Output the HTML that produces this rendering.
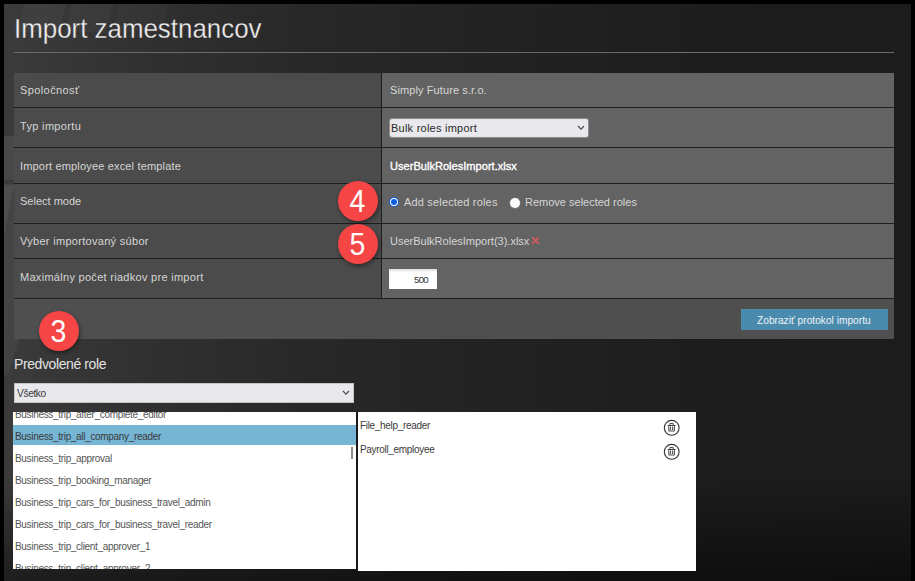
<!DOCTYPE html>
<html><head><meta charset="utf-8">
<style>
html,body{margin:0;padding:0;}
body{width:915px;height:581px;background:#000;position:relative;overflow:hidden;font-family:"Liberation Sans",sans-serif;}
.panel{position:absolute;left:4px;top:4px;width:907px;height:577px;overflow:hidden;
 background:linear-gradient(180deg,rgba(0,0,0,0) 0px,rgba(0,0,0,0) 470px,rgba(0,0,0,.5) 577px),
 linear-gradient(90deg,#3b3b3b 0px,#303030 150px,#282828 300px,#222 500px,#1d1d1d 700px,#1c1c1c 907px);}
.abs{position:absolute;white-space:nowrap;}
.t{position:absolute;white-space:nowrap;line-height:1;}
.lab{color:#d6d6d6;font-size:11px;left:20px;}
.val{color:#d6d6d6;font-size:11px;left:390px;}
.badge{position:absolute;width:40px;height:40px;border-radius:50%;background:#f54545;box-shadow:1px 2px 4px rgba(0,0,0,.45);color:#fff;font-size:30.6px;text-align:center;line-height:40px;}
.badge span{display:inline-block;transform:scaleX(.93);}
.item{position:absolute;left:16px;font-size:10px;letter-spacing:-0.32px;color:#555;line-height:1;white-space:nowrap;}
</style></head>
<body>
<div class="panel"></div>
<div class="abs" style="left:4px;top:4px;width:300px;height:27.5px;overflow:hidden">
 <div class="abs" style="left:19.7px;top:0;width:41.9px;height:27.5px;background:rgba(255,255,255,.035);transform:skewX(-13.7deg);transform-origin:0 0"></div>
 <div class="abs" style="left:68px;top:0;width:41px;height:27.5px;background:rgba(255,255,255,.03);transform:skewX(-13.7deg);transform-origin:0 0"></div>
 <div class="abs" style="left:115px;top:0;width:50px;height:27.5px;background:rgba(255,255,255,.02);transform:skewX(-13.7deg);transform-origin:0 0"></div>
</div>
<div class="abs" style="left:4px;top:136px;width:10px;height:44px;background:#484848"></div>
<div class="abs" style="left:4px;top:180px;width:10px;height:4px;background:#3c3c3c"></div>
<div class="abs" style="left:4px;top:184px;width:10px;height:147px;background:#444"></div>
<div class="abs" style="left:4px;top:185px;width:10px;height:50px;background:#4e4e4e;clip-path:polygon(0 0,100% 0,0 100%)"></div>
<div class="abs" style="left:4px;top:331px;width:20px;height:44px;background:#434343;clip-path:polygon(0 0,50% 0,50% 18%,75% 18%,20% 100%,0 100%)"></div>
<!-- title -->
<svg class="abs" style="left:0;top:0" width="915" height="60" viewBox="0 0 915 60"><defs><linearGradient id="tg" gradientUnits="userSpaceOnUse" x1="4" y1="0" x2="911" y2="0"><stop offset="0" stop-color="#3b3b3b"/><stop offset="0.165" stop-color="#303030"/><stop offset="0.33" stop-color="#282828"/><stop offset="0.55" stop-color="#222"/></linearGradient></defs>
<text x="14" y="38" font-family="Liberation Sans" font-size="27.6" textLength="247.5" lengthAdjust="spacingAndGlyphs" fill="#f0f0f0" stroke="url(#tg)" stroke-width="0.3">Import zamestnancov</text></svg>
<div class="abs" style="left:14px;top:52px;width:880px;height:1px;background:#6a6a6a"></div>

<!-- table -->
<div class="abs" style="left:14px;top:73px;width:367px;height:225px;background:#4b4b4b"></div>
<div class="abs" style="left:382px;top:73px;width:512px;height:225px;background:#636363"></div>
<div class="abs" style="left:381px;top:73px;width:1px;height:225px;background:#1f1f1f"></div>
<div class="abs" style="left:14px;top:298px;width:880px;height:41px;background:#4f4f4f"></div>
<div class="abs" style="left:14px;top:107px;width:880px;height:1px;background:#1f1f1f"></div>
<div class="abs" style="left:14px;top:147px;width:880px;height:1px;background:#1f1f1f"></div>
<div class="abs" style="left:14px;top:183px;width:880px;height:1px;background:#1f1f1f"></div>
<div class="abs" style="left:14px;top:223px;width:880px;height:1px;background:#1f1f1f"></div>
<div class="abs" style="left:14px;top:258px;width:880px;height:1px;background:#1f1f1f"></div>
<div class="abs" style="left:14px;top:298px;width:880px;height:1px;background:#1f1f1f"></div>

<div class="t lab" style="top:85px;letter-spacing:0.4px">Spoločnosť</div>
<div class="t lab" style="top:121px;letter-spacing:0.33px">Typ importu</div>
<div class="t lab" style="top:161px;letter-spacing:0.17px">Import employee excel template</div>
<div class="t lab" style="top:196px">Select mode</div>
<div class="t lab" style="top:236px;letter-spacing:0.3px">Vyber importovaný súbor</div>
<div class="t lab" style="top:272px;letter-spacing:0.29px">Maximálny počet riadkov pre import</div>

<div class="t val" style="top:85px;letter-spacing:0.1px">Simply Future s.r.o.</div>
<!-- select -->
<div class="abs" style="left:389px;top:118px;width:198px;height:18px;background:#e9e8ed;border:1px solid #8d8c92;border-radius:3px"></div>
<div class="t" style="left:391px;top:123px;font-size:11px;letter-spacing:0.24px;color:#2a2a2a">Bulk roles import</div>
<svg class="abs" style="left:577px;top:125px" width="8" height="6" viewBox="0 0 8 6"><path d="M1 1 L4 4.2 L7 1" fill="none" stroke="#4a4a4a" stroke-width="1.1"/></svg>

<div class="t val" style="top:161px;color:#fff;letter-spacing:0.04px;-webkit-text-stroke:0.35px #fff">UserBulkRolesImport.xlsx</div>

<!-- radios -->
<div class="abs" style="left:389px;top:197px;width:10px;height:10px;border-radius:50%;background:#0b5fe0;box-sizing:border-box;"></div>
<div class="abs" style="left:391px;top:199px;width:6px;height:6px;border-radius:50%;background:#0b5fe0;box-shadow:0 0 0 1px #fff;box-sizing:border-box;"></div>
<div class="t" style="left:404px;top:197px;font-size:11px;letter-spacing:0.17px;color:#d6d6d6">Add selected roles</div>
<div class="abs" style="left:510px;top:197.5px;width:10px;height:10px;border-radius:50%;background:#fafafa;box-shadow:0 0 1px 0.5px rgba(150,150,180,.7)"></div>
<div class="t" style="left:525px;top:197px;font-size:11px;color:#d6d6d6">Remove selected roles</div>

<div class="t val" style="top:236px">UserBulkRolesImport(3).xlsx</div>
<svg class="abs" style="left:530px;top:235px" width="12" height="12" viewBox="0 0 12 12"><path d="M2.2 2.3L8.8 8.9M8.8 2.3L2.2 8.9" fill="none" stroke="#de5a5a" stroke-width="1.6"/></svg>

<!-- input -->
<div class="abs" style="left:389px;top:269px;width:48px;height:20px;background:#fff;box-shadow:inset 0 2px 2px rgba(0,0,0,.12)"></div>
<div class="t" style="left:414px;top:275px;font-size:9.8px;letter-spacing:-0.8px;color:#333">500</div>

<!-- button -->
<div class="abs" style="left:741px;top:309px;width:147px;height:21px;background:#4a8aad"></div>
<div class="t" style="left:757px;top:315.5px;font-size:10.2px;color:#eef3f6">Zobraziť protokol importu</div>

<!-- badges -->
<div class="badge" style="left:338px;top:181px"><span>4</span></div>
<div class="badge" style="left:338px;top:224px"><span>5</span></div>
<div class="badge" style="left:39px;top:311px"><span>3</span></div>

<!-- predvolene role -->
<div class="t" style="left:14px;top:357px;font-size:14px;letter-spacing:-0.4px;color:#e2e2e2">Predvolené role</div>
<div class="abs" style="left:14px;top:383px;width:338px;height:18px;background:#e9e8ed;border:1px solid #c4c4c8"></div>
<div class="t" style="left:17px;top:389px;font-size:10.2px;letter-spacing:-0.38px;color:#3a3a3a">Všetko</div>
<svg class="abs" style="left:342px;top:390px" width="8" height="6" viewBox="0 0 8 6"><path d="M1 1 L4 4.2 L7 1" fill="none" stroke="#4a4a4a" stroke-width="1.1"/></svg>

<!-- list -->
<div class="abs" style="left:13px;top:412px;width:343px;height:157px;background:#fff;overflow:hidden">
 <div class="abs" style="left:0;top:13px;width:343px;height:20px;background:#76b5d4"></div>
 <div class="abs" style="left:338px;top:35px;width:2px;height:12px;background:#8a8a8a"></div>
 <div class="item" style="left:2px;top:-2px">Business_trip_after_complete_editor</div>
 <div class="item" style="left:2px;top:20px;color:#3a3a3a">Business_trip_all_company_reader</div>
 <div class="item" style="left:2px;top:42px">Business_trip_approval</div>
 <div class="item" style="left:2px;top:64px">Business_trip_booking_manager</div>
 <div class="item" style="left:2px;top:86px">Business_trip_cars_for_business_travel_admin</div>
 <div class="item" style="left:2px;top:108px">Business_trip_cars_for_business_travel_reader</div>
 <div class="item" style="left:2px;top:130px">Business_trip_client_approver_1</div>
 <div class="item" style="left:2px;top:152px">Business_trip_client_approver_2</div>
</div>
<div class="abs" style="left:356px;top:412px;width:2px;height:158px;background:#1a1a1a"></div>
<div class="abs" style="left:358px;top:412px;width:338px;height:158.5px;background:#fff"></div>
<div class="item" style="left:360px;top:421px;color:#3a3a3a">File_help_reader</div>
<div class="item" style="left:360px;top:445px;color:#3a3a3a">Payroll_employee</div>
<svg class="abs" style="left:663px;top:419px" width="18" height="18" viewBox="0 0 18 18"><circle cx="8.7" cy="8.8" r="7.4" fill="none" stroke="#333" stroke-width="1.1"/><path d="M4.8 6.5H12.4M7 6.5V4.5H10.2V6.5M5.8 6.5V12H11.4V6.5M7.6 7.6V11M9.6 7.6V11" fill="none" stroke="#444" stroke-width="1"/></svg>
<svg class="abs" style="left:663px;top:443px" width="18" height="18" viewBox="0 0 18 18"><circle cx="8.7" cy="8.8" r="7.4" fill="none" stroke="#333" stroke-width="1.1"/><path d="M4.8 6.5H12.4M7 6.5V4.5H10.2V6.5M5.8 6.5V12H11.4V6.5M7.6 7.6V11M9.6 7.6V11" fill="none" stroke="#444" stroke-width="1"/></svg>
</body></html>
